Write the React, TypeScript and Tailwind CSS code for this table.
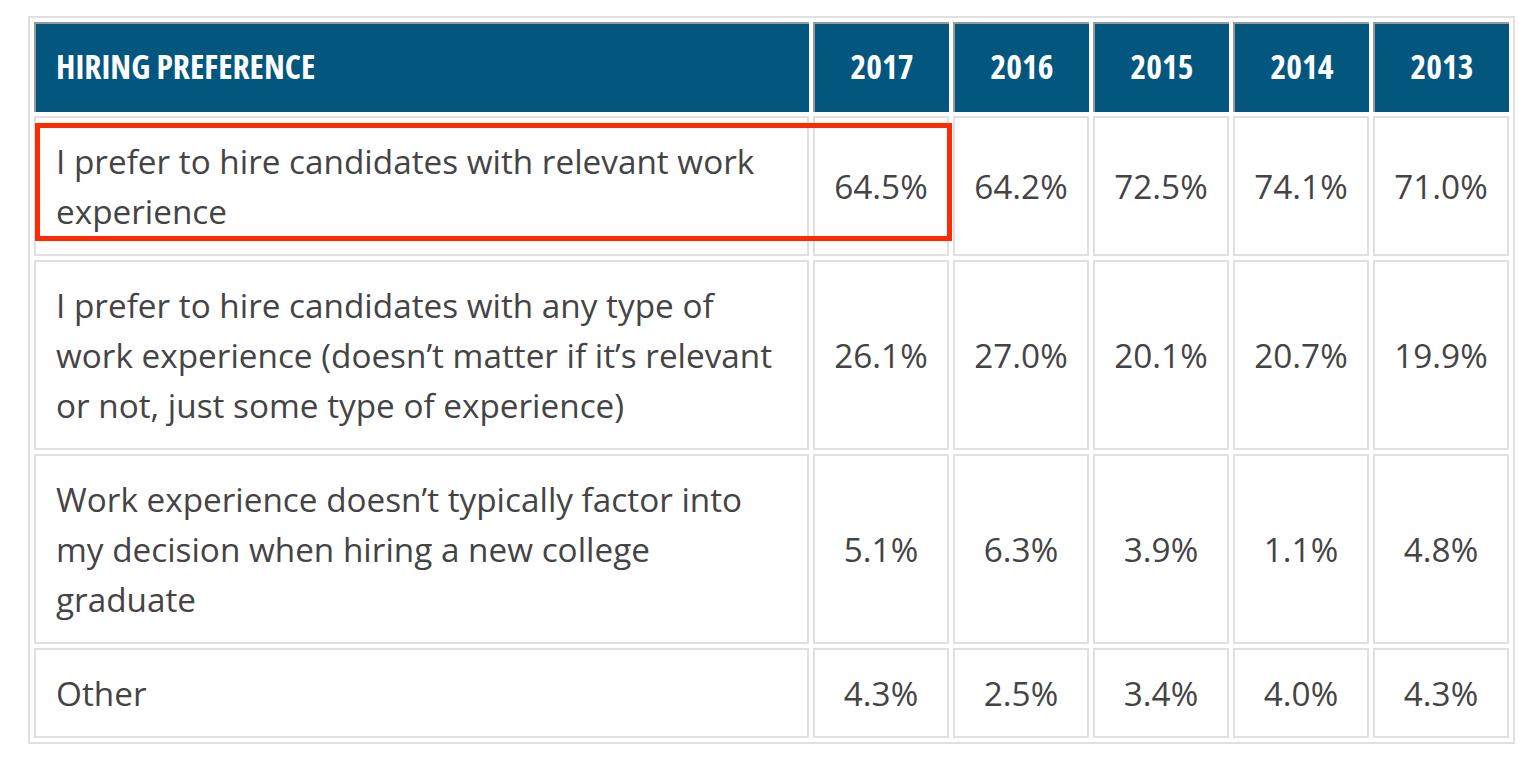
import React from "react";

const years = ["2017", "2016", "2015", "2014", "2013"];
const rows: { label: string; values: string[] }[] = [
  { label: "I prefer to hire candidates with relevant work experience", values: ["64.5%", "64.2%", "72.5%", "74.1%", "71.0%"] },
  {
    label: "I prefer to hire candidates with any type of work experience (doesn\u2019t matter if it\u2019s relevant or not, just some type of experience)",
    values: ["26.1%", "27.0%", "20.1%", "20.7%", "19.9%"],
  },
  {
    label: "Work experience doesn\u2019t typically factor into my decision when hiring a new college graduate",
    values: ["5.1%", "6.3%", "3.9%", "1.1%", "4.8%"],
  },
  { label: "Other", values: ["4.3%", "2.5%", "3.4%", "4.0%", "4.3%"] },
];

export default function App() {
  return (
    <div className="w-[1540px] h-[768px] bg-white relative" style={{ fontFamily: '"Open Sans", sans-serif' }}>
      <div className="absolute left-[28px] top-[16px]">
        <table className="border-2 border-[#e0e0e0] border-separate border-spacing-[4px] table-fixed w-[1487px]">
          <colgroup>
            <col className="w-[775px]" />
            <col />
            <col />
            <col />
            <col />
            <col />
          </colgroup>
          <thead>
            <tr>
              <th className="h-[90px] pb-[3px] bg-[#03577f] border-t-2 border-l-2 border-[#999999] text-left pl-[20px] text-white font-bold [font-stretch:75%] text-[33.5px]">
                HIRING PREFERENCE
              </th>
              {years.map((y) => (
                <th
                  key={y}
                  className="h-[90px] pb-[3px] bg-[#03577f] border-t-2 border-l-2 border-[#999999] text-center text-white font-bold [font-stretch:75%] text-[33.5px]"
                >
                  {y}
                </th>
              ))}
            </tr>
          </thead>
          <tbody>
            {rows.map((r) => (
              <tr key={r.label}>
                <td className="border-2 border-[#e0e0e0] py-[18px] pl-[20px] pr-[20px] text-[33.3px] font-[450] leading-[50px] text-[#444444] align-middle">
                  {r.label}
                </td>
                {r.values.map((v, i) => (
                  <td key={i} className="border-2 border-[#e0e0e0] text-center text-[33.3px] font-[450] leading-[50px] text-[#444444] align-middle">
                    {v}
                  </td>
                ))}
              </tr>
            ))}
          </tbody>
        </table>
      </div>
      <div className="absolute left-[35px] top-[123px] w-[917px] h-[118px] border-[5px] border-[#ff2a00] pointer-events-none" />
    </div>
  );
}
